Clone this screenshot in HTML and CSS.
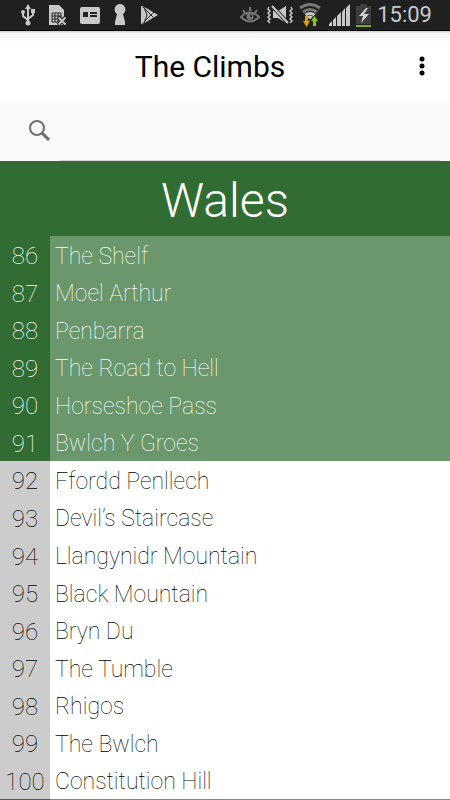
FILE: index.html
```html
<!DOCTYPE html>
<html lang="en">
<head>
    <meta charset="UTF-8">
    <meta name="viewport" content="width=device-width, initial-scale=1.0">
    <title>The Climbs</title>
    <link rel="stylesheet" href="styles.css">
</head>
<body>
    <!-- Status bar -->
    <div class="status-bar">
        <div class="status-left">
            <svg width="14" height="22" viewBox="0 0 14 22" fill="#c8c8c8" stroke="#c8c8c8" stroke-width="2">
                <path d="M7 3v16M2 8v4l5 4M12 8v3l-5 4" fill="none"/>
                <path d="M7 0l3 5H4z" stroke="none"/>
                <circle cx="7" cy="19" r="2.500" stroke="none"/>
                <circle cx="2" cy="8" r="2" stroke="none"/>
                <path d="M10 5h4v4h-4z" stroke="none"/>
            </svg>
            <svg width="19" height="22" viewBox="0 0 19 22">
                <path d="M1 1h10l5 5v15H1z" fill="#c8c8c8"/>
                <path d="M4 9h9v9H4zM4 12h9M4 15h9M7 9v9M10 9v9" fill="none" stroke="#222"/>
                <path d="M10 13l8 8M18 13l-8 8" stroke="#222" stroke-width="4"/>
                <path d="M10.500 13.500l7 7M17.500 13.500l-7 7" stroke="#c8c8c8" stroke-width="2"/>
            </svg>
            <svg width="20" height="22" viewBox="0 0 20 22">
                <rect x="0" y="3" width="20" height="17" rx="2" fill="#c8c8c8"/>
                <path d="M3 8h5v5H3zM10 8h7v2h-7zM10 11h7v2h-7z" fill="#222"/>
            </svg>
            <svg width="14" height="22" viewBox="0 0 14 22">
                <path d="M7 0a5.500 5.500 0 0 1 3 10l2 8v3H2v-3l2-8a5.500 5.500 0 0 1 3-10z" fill="#c8c8c8"/>
            </svg>
            <svg width="19" height="22" viewBox="0 0 19 22">
                <path d="M1 1l17 10L1 21z" fill="#c8c8c8"/>
                <path d="M1 1l13 13M1 21L14 8M4 3l3 8-3 8" stroke="#222" fill="none"/>
            </svg>
        </div>
        <div class="status-right">
            <svg width="21" height="22" viewBox="0 0 21 22" fill="none" stroke="#777" stroke-width="2">
                <path d="M1 13q9-9 18 0-9 9-18 0zM3 6l2 3M10 3v4M17 6l-2 3"/>
                <circle cx="10" cy="12.500" r="3.500" fill="#777" stroke="none"/>
                <circle cx="11" cy="12" r="1.200" fill="#222" stroke="none"/>
            </svg>
            <svg width="26" height="22" viewBox="0 0 26 22" fill="none" stroke="#c8c8c8" stroke-width="1.500">
                <path d="M2 3l-1 2 2 2-2 2 2 2-2 2 2 2-2 2 2 2M24 3l1 2-2 2 2 2-2 2 2 2-2 2 2 2-2 2"/>
                <path d="M6 7h5l8-5v17l-8-5H6z" fill="#c8c8c8" stroke="none"/>
                <path d="M5 2l17 18" stroke="#222" stroke-width="4"/>
                <path d="M5 2l16 17" stroke-width="2"/>
            </svg>
            <svg class="wifi" width="22" height="24" viewBox="0 0 22 24" fill="none" stroke-width="3">
                <path d="M1 5q10-7 20 0M4 9q7-5 14 0" stroke="#777"/>
                <path d="M6.500 12q4.500-3 9 0" stroke="#c8c8c8"/>
                <path d="M8 13.500q3-2 6 0l-3 3z" fill="#c8c8c8"/>
                <path d="M6 13h3v5h2l-3.500 6L4 18h2z" fill="#e0a000"/>
                <path d="M14 23h3v-5h2l-3.500-5L12 18h2z" fill="#8c0"/>
            </svg>
            <svg width="21" height="22" viewBox="0 0 21 22" fill="#c8c8c8">
                <path d="M0 22v-2l3-3v5zM4 22v-6l3-3v9zM8 22V12l4-4v14zM13 22V8l3-4v18zM17 22V4l4-4v22z"/>
            </svg>
            <svg width="15" height="23" viewBox="0 0 15 23">
                <path d="M4 0h7v2h4v18H0V2h4z" fill="#3d3d3d"/>
                <path d="M10 4l-7 8h4l-2 7 8-9H8l4-6z" fill="#d0d0d0"/>
                <path d="M0 21h15v2H0z" fill="#7ea82e"/>
            </svg>
            <span class="clock">15:09</span>
        </div>
    </div>

    <!-- Title bar -->
    <header class="title-bar">
        <h1>The Climbs</h1>
        <button class="menu-button" aria-label="More options">
            <svg width="6" height="20" viewBox="0 0 6 20">
                <circle cx="3" cy="3" r="2.500"/>
                <circle cx="3" cy="10" r="2.500"/>
                <circle cx="3" cy="17" r="2.500"/>
            </svg>
        </button>
    </header>

    <!-- Search -->
    <form class="search-bar">
        <label for="search" aria-label="Search climbs">
            <svg width="24" height="24" viewBox="0 0 24 24" fill="none" stroke="#6e6e6e">
                <circle cx="9" cy="9" r="7" stroke-width="2"/>
                <path d="M14 14l7 7" stroke-width="3"/>
            </svg>
        </label>
        <input type="search" id="search">
    </form>

    <!-- Climbs -->
    <main class="region">
        <h2>Wales</h2>
        <ul class="climbs">
            <li class="climb done"><span class="number">86</span><span class="name">The Shelf</span></li>
            <li class="climb done"><span class="number">87</span><span class="name">Moel Arthur</span></li>
            <li class="climb done"><span class="number">88</span><span class="name">Penbarra</span></li>
            <li class="climb done"><span class="number">89</span><span class="name">The Road to Hell</span></li>
            <li class="climb done"><span class="number">90</span><span class="name">Horseshoe Pass</span></li>
            <li class="climb done"><span class="number">91</span><span class="name">Bwlch Y Groes</span></li>
            <li class="climb"><span class="number">92</span><span class="name">Ffordd Penllech</span></li>
            <li class="climb"><span class="number">93</span><span class="name">Devil’s Staircase</span></li>
            <li class="climb"><span class="number">94</span><span class="name">Llangynidr Mountain</span></li>
            <li class="climb"><span class="number">95</span><span class="name">Black Mountain</span></li>
            <li class="climb"><span class="number">96</span><span class="name">Bryn Du</span></li>
            <li class="climb"><span class="number">97</span><span class="name">The Tumble</span></li>
            <li class="climb"><span class="number">98</span><span class="name">Rhigos</span></li>
            <li class="climb"><span class="number">99</span><span class="name">The Bwlch</span></li>
            <li class="climb"><span class="number">100</span><span class="name">Constitution Hill</span></li>
        </ul>
        <div class="region-end"></div>
    </main>
</body>
</html>
```
FILE: styles.css
```css
* {
    margin: 0;
    padding: 0;
    box-sizing: border-box;
}

body {
    font-family: Roboto, sans-serif;
    display: flex;
    flex-direction: column;
    min-height: 100vh;
    background-color: white;
}

svg {
    display: block;
}

/* Status bar */
.status-bar {
    display: flex;
    justify-content: space-between;
    height: 31px;
    padding: 0 18px 0 21px;
    background-color: #202020;
    border-bottom: 1px solid black;
}

.status-left,
.status-right {
    display: flex;
    align-items: center;
}

.status-left {
    gap: 13px;
}

.status-right {
    gap: 6px;
}

.wifi {
    margin-right: 2px;
}

.clock {
    color: #c8c8c8;
    font-size: 22px;
    line-height: 30px;
}

/* Title bar */
.title-bar {
    display: grid;
    grid-template-columns: 1fr auto 1fr;
    align-items: center;
    height: 70px;
    padding: 0 15px 0 0;
    background: linear-gradient(#c8c8c8, #f4f4f4 2px, white 12px);
}

.title-bar h1 {
    grid-column: 2;
    padding-right: 15px;
    font-size: 30px;
    font-weight: 400;
}

.menu-button {
    justify-self: end;
    padding: 4px 10px;
    border: none;
    background: none;
    cursor: pointer;
}

/* Search */
.search-bar {
    display: flex;
    align-items: center;
    height: 60px;
    padding: 0 10px 0 28px;
    background-color: #fafafa;
}

.search-bar label {
    width: 32px;
}

.search-bar input {
    flex: 1;
    height: 100%;
    border: none;
    border-bottom: 1px solid #d8d8d8;
    outline: none;
    background: none;
    font-family: inherit;
    font-size: 24px;
}

/* Climbs */
.region {
    display: flex;
    flex-direction: column;
    flex: 1;
}

.region h2 {
    height: 75px;
    background-color: #316d32;
    color: white;
    font-size: 48px;
    font-weight: 300;
    line-height: 80px;
    text-align: center;
}

.climbs {
    display: flex;
    flex-direction: column;
    flex: 1;
    list-style: none;
}

.climb {
    display: flex;
    flex: 1;
    min-height: 37px;
    font-size: 24px;
    font-weight: 100;
    color: black;
}

.climb span {
    display: flex;
    align-items: center;
    padding-top: 3px;
}

.number {
    justify-content: center;
    width: 50px;
    background-color: #cccccc;
}

.name {
    flex: 1;
    padding-left: 5px;
    font-size: 23px;
}

.done {
    color: white;
}

.done .number {
    background-color: #316d32;
}

.done .name {
    background-color: #6a976c;
}

.region-end {
    height: 1px;
    background: linear-gradient(to right, #316d32 50px, #6a976c 50px);
}
```
